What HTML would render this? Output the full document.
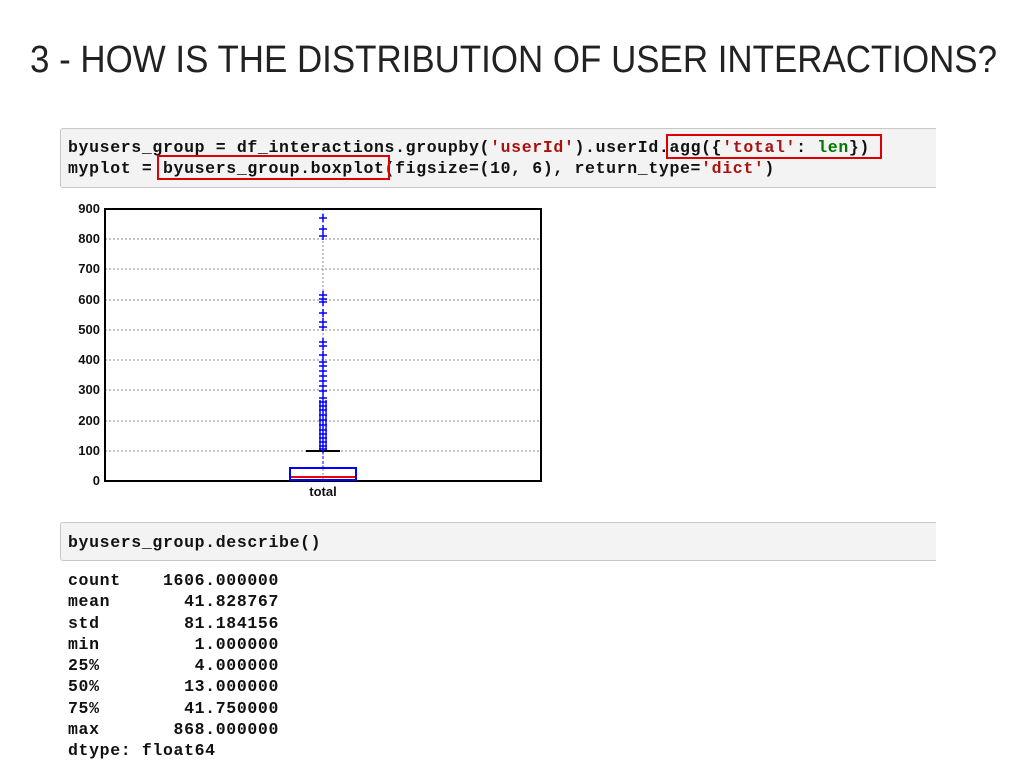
<!DOCTYPE html>
<html><head><meta charset="utf-8"><style>
body{margin:0;width:1024px;height:768px;background:#fff;position:relative;overflow:hidden;font-family:"Liberation Sans",sans-serif}
.cell{position:absolute;left:60px;width:875px;background:#f3f3f3;border:1px solid #c8c8c8;border-right:none;border-radius:3px 0 0 3px}
.mono{font-family:"Liberation Mono",monospace;font-weight:bold;font-size:16.5px;letter-spacing:0.65px;color:#111;white-space:pre;position:absolute}
.s{color:#a11}.g{color:#070}
.red{position:absolute;border:2.5px solid #d00;}
</style></head><body>
<svg style="position:absolute;left:0;top:0" width="1024" height="100">
<text x="30" y="72" font-family="Liberation Sans, sans-serif" font-size="38" fill="#222" textLength="967" lengthAdjust="spacingAndGlyphs">3 - HOW IS THE DISTRIBUTION OF USER INTERACTIONS?</text>
</svg>
<div class="cell" style="top:128px;height:58px"></div>
<div class="mono" style="left:68px;top:138px">byusers_group = df_interactions.groupby(<span class="s">'userId'</span>).userId.agg({<span class="s">'total'</span>: <span class="g">len</span>})</div>
<div class="mono" style="left:68px;top:159px">myplot = byusers_group.boxplot(figsize=(10, 6), return_type=<span class="s">'dict'</span>)</div>
<div class="red" style="left:666px;top:134px;width:212px;height:21px"></div>
<div class="red" style="left:157px;top:155px;width:229px;height:21px"></div>
<svg style="position:absolute;left:0;top:195px" width="560" height="320" font-family="Liberation Sans, sans-serif" font-size="13" font-weight="bold">
<g stroke="#888" stroke-dasharray="2,2" stroke-width="1">
<line x1="105" x2="541" y1="44" y2="44"/><line x1="105" x2="541" y1="74" y2="74"/><line x1="105" x2="541" y1="105" y2="105"/><line x1="105" x2="541" y1="135" y2="135"/><line x1="105" x2="541" y1="165" y2="165"/><line x1="105" x2="541" y1="195" y2="195"/><line x1="105" x2="541" y1="226" y2="226"/><line x1="105" x2="541" y1="256" y2="256"/><line x1="323" x2="323" y1="14" y2="286"/>
</g>
<rect x="105" y="14" width="436" height="272" fill="none" stroke="#000" stroke-width="2"/>
<g text-anchor="end" fill="#111">
<text x="100" y="18">900</text><text x="100" y="48">800</text><text x="100" y="78">700</text><text x="100" y="109">600</text><text x="100" y="139">500</text><text x="100" y="169">400</text><text x="100" y="199">300</text><text x="100" y="230">200</text><text x="100" y="260">100</text><text x="100" y="290">0</text>
</g>
<text x="323" y="301" text-anchor="middle" fill="#111">total</text>
<line x1="306" x2="340" y1="256" y2="256" stroke="#000" stroke-width="2"/>
<line x1="323" x2="323" y1="256" y2="273" stroke="#00f" stroke-dasharray="3,2"/>
<rect x="290" y="273" width="66" height="12" fill="none" stroke="#00f" stroke-width="2"/>
<line x1="291" x2="355" y1="282" y2="282" stroke="#e00" stroke-width="2"/>
<g stroke="#00f" stroke-width="1.5" fill="none">
<path d="M319 23h8M323 19v8M319 34h8M323 30v8M319 41h8M323 37v8M319 100h8M323 96v8M319 104h8M323 100v8M319 107h8M323 103v8M319 118h8M323 114v8M319 127h8M323 123v8M319 132h8M323 128v8M319 147h8M323 143v8M319 151h8M323 147v8M319 160h8M323 156v8M319 167h8M323 163v8M319 171h8M323 167v8M319 176h8M323 172v8M319 181h8M323 177v8M319 186h8M323 182v8M319 191h8M323 187v8M319 196h8M323 192v8M319 203h8M323 199v8M319 207h8M323 203v8M319 211h8M323 207v8M319 215h8M323 211v8M319 220h8M323 216v8M319 225h8M323 221v8M319 230h8M323 226v8M319 235h8M323 231v8M319 239h8M323 235v8M319 243h8M323 239v8M319 247h8M323 243v8M319 251h8M323 247v8M319 254h8M323 250v8"/>
<path d="M320 205v50M326 205v50"/>
</g>
</svg>
<div class="cell" style="top:522px;height:37px"></div>
<div class="mono" style="left:68px;top:533px">byusers_group.describe()</div>
<div class="mono" style="left:68px;top:570px;line-height:21.3px">count    1606.000000
mean       41.828767
std        81.184156
min         1.000000
25%         4.000000
50%        13.000000
75%        41.750000
max       868.000000
dtype: float64</div>
</body></html>
